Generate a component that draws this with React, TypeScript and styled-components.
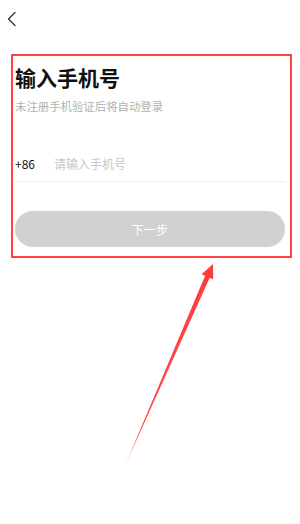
import React, { useState } from 'react';
import styled, { createGlobalStyle } from 'styled-components';

const GlobalStyle = createGlobalStyle`
  html, body {
    margin: 0;
    padding: 0;
    background: #ffffff;
  }
  body {
    font-family: "Noto Sans CJK SC", "Noto Sans", sans-serif;
  }
`;

const App = () => {
  const [phone, setPhone] = useState('');

  return (
    <Page>
      <GlobalStyle />
      <Header>
        <BackButton aria-label="back">
          <svg width="20" height="20" viewBox="0 0 20 20" fill="none">
            <polyline
              points="8,3.5 1.5,10 8,16.5"
              stroke="#333"
              strokeWidth="1.3"
              strokeLinecap="round"
              strokeLinejoin="round"
            />
          </svg>
        </BackButton>
      </Header>

      <FormBox>
        <Title>输入手机号</Title>
        <SubTitle>未注册手机验证后将自动登录</SubTitle>

        <PhoneRow>
          <AreaCode>+86</AreaCode>
          <PhoneInput
            type="tel"
            placeholder="请输入手机号"
            value={phone}
            onChange={(e) => setPhone(e.target.value)}
          />
        </PhoneRow>

        <NextButton disabled={!phone}>下一步</NextButton>
      </FormBox>

      {/* annotation arrow pointing at the form */}
      <Arrow width="300" height="524" viewBox="0 0 300 524">
        <defs>
          <linearGradient id="fade" x1="124" y1="468" x2="213" y2="264" gradientUnits="userSpaceOnUse">
            <stop offset="0" stopColor="#ff3b3b" stopOpacity="0.15" />
            <stop offset="0.15" stopColor="#ff3b3b" stopOpacity="0.9" />
            <stop offset="1" stopColor="#ff3b3b" />
          </linearGradient>
        </defs>
        <polygon
          points="124,468 205.1,275.8 201.6,274.3 213,264 213.2,279.3 209.7,277.8"
          fill="url(#fade)"
        />
      </Arrow>
    </Page>
  );
};

export default App;

const Page = styled.div`
  position: relative;
  width: 300px;
  height: 524px;
  background: #fff;
  overflow: hidden;
`;

const Header = styled.div`
  height: 38px;
  display: flex;
  align-items: center;
  padding-left: 7px;
  box-sizing: border-box;
`;

const BackButton = styled.button`
  border: none;
  background: transparent;
  padding: 0;
  width: 20px;
  height: 20px;
  display: flex;
  align-items: center;
  justify-content: flex-start;
  cursor: pointer;
`;

const FormBox = styled.div`
  margin: 16px 0 0 11px;
  width: 281px;
  border: 2px solid #ff4242;
  padding: 9px 5px 9px 2px;
  box-sizing: border-box;
  display: flex;
  flex-direction: column;
`;

const Title = styled.h1`
  margin: 0;
  font-size: 21px;
  line-height: 24px;
  font-weight: bold;
  color: #111;
`;

const SubTitle = styled.p`
  margin: 9px 0 0;
  font-size: 11.4px;
  line-height: 16px;
  color: #b0b0b0;
`;

const PhoneRow = styled.div`
  margin-top: 31px;
  height: 36px;
  display: flex;
  align-items: center;
  border-bottom: 1px solid #efefef;
`;

const AreaCode = styled.span`
  width: 39px;
  flex-shrink: 0;
  font-size: 12px;
  color: #111;
`;

const PhoneInput = styled.input`
  flex: 1;
  min-width: 0;
  border: none;
  outline: none;
  padding: 0;
  font-family: inherit;
  font-size: 12px;
  color: #111;
  background: transparent;

  &::placeholder {
    color: #c8c8c8;
    opacity: 1;
  }
`;

const NextButton = styled.button`
  margin-top: 29px;
  height: 36px;
  width: 100%;
  border: none;
  border-radius: 18px;
  background: #d1d1d1;
  color: #ffffff;
  font-family: inherit;
  font-size: 12px;
  letter-spacing: 0.02em;
`;

const Arrow = styled.svg`
  position: absolute;
  left: 0;
  top: 0;
  pointer-events: none;
`;
